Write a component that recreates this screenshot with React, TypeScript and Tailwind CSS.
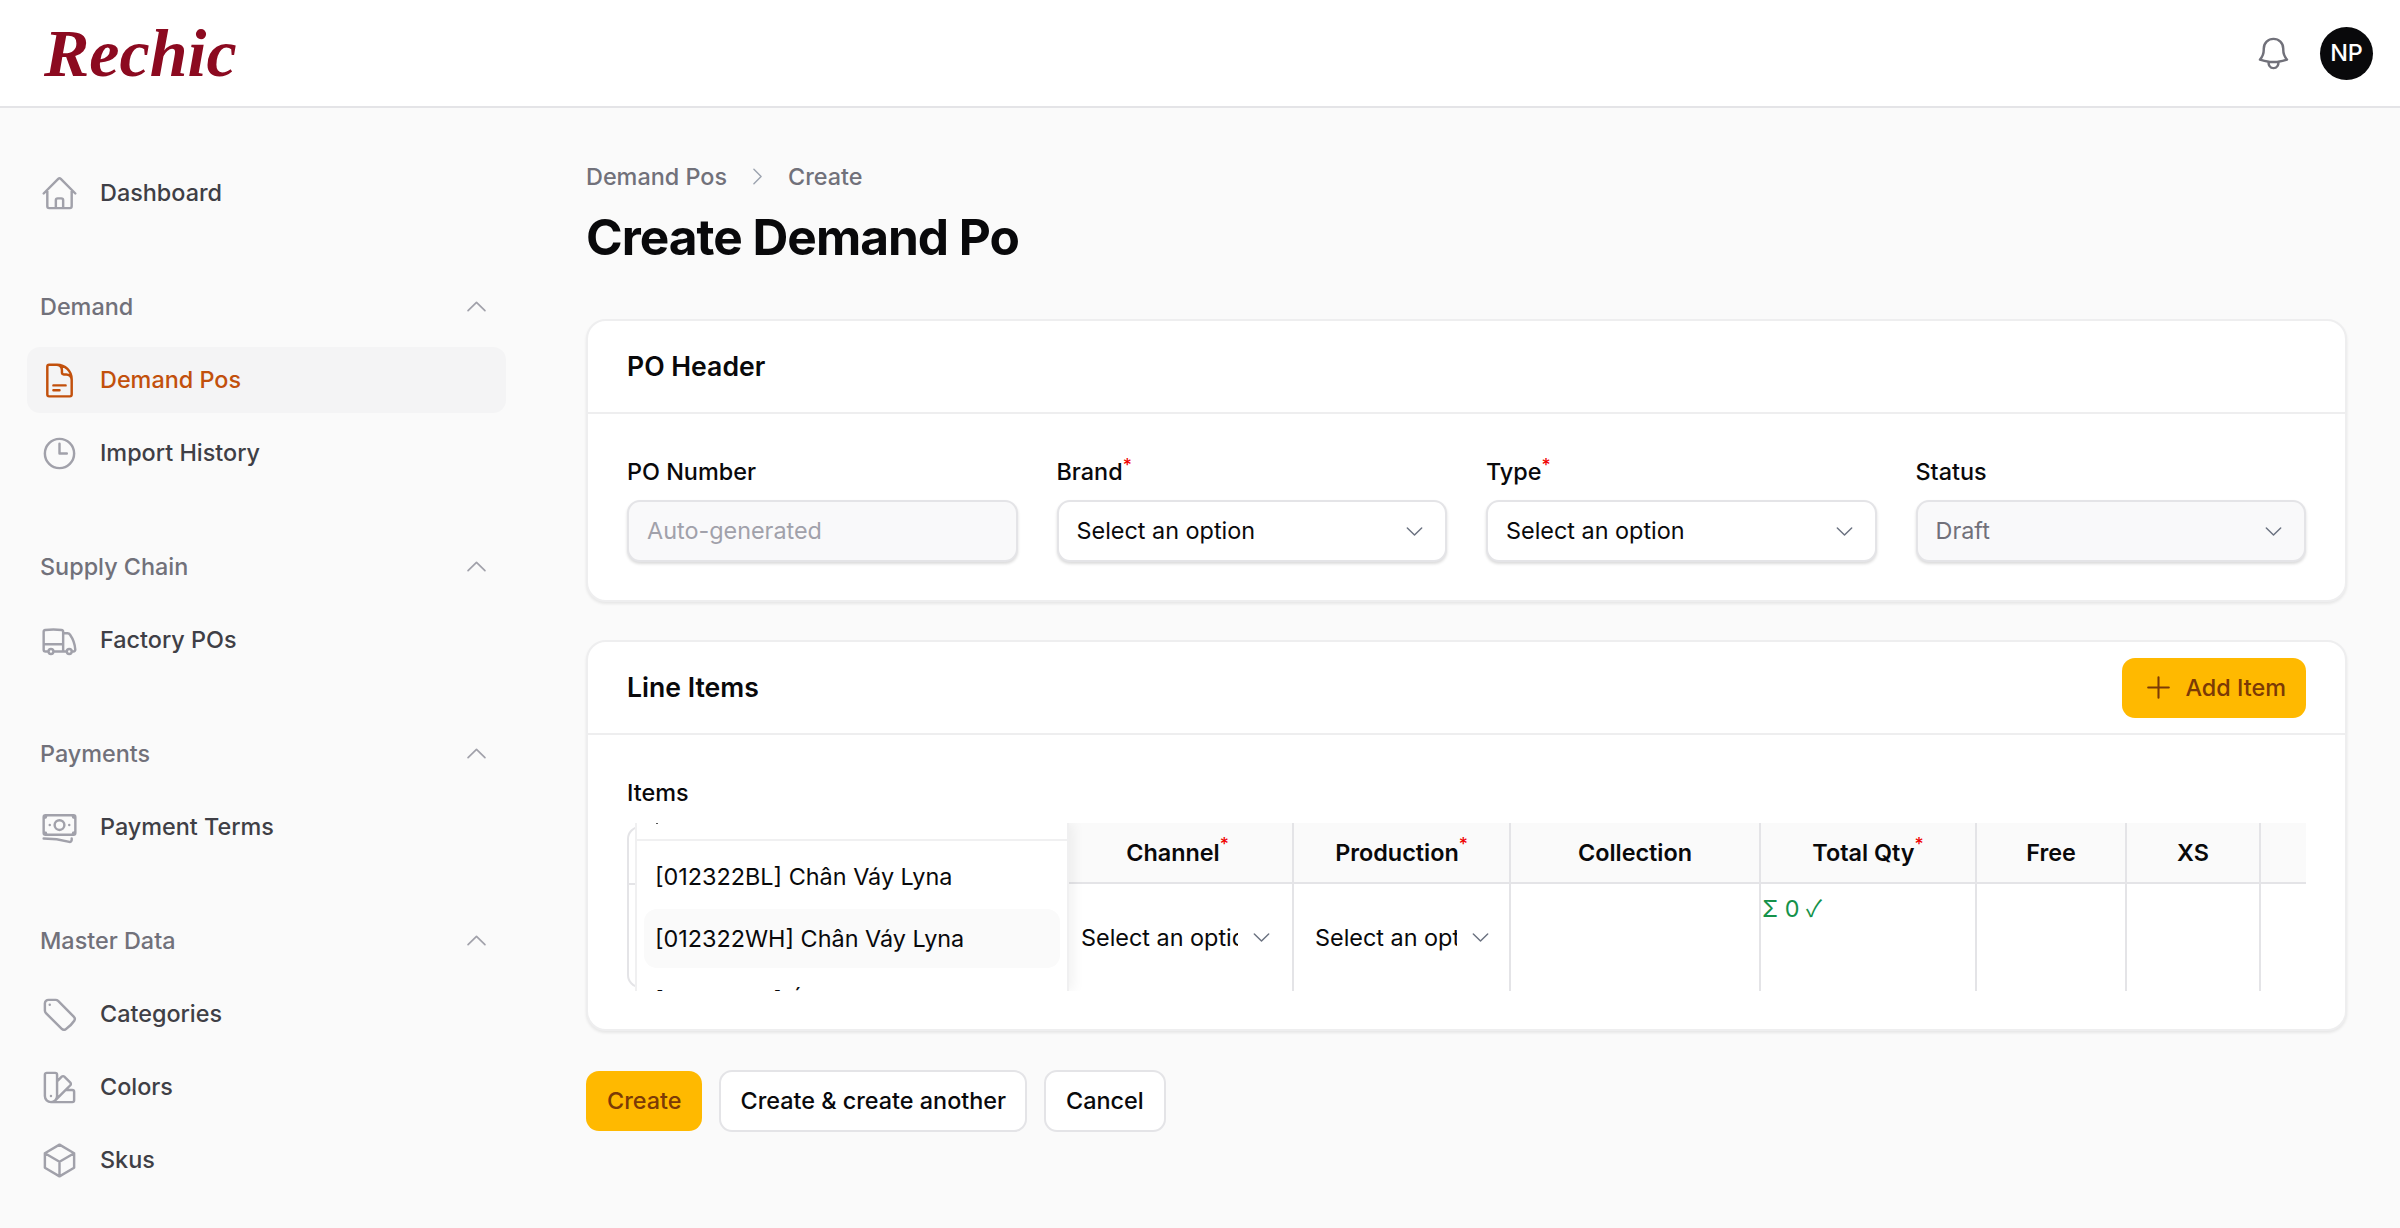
import { ReactNode } from "react";
import {
  HiOutlineBanknotes,
  HiOutlineBell,
  HiOutlineChevronDown,
  HiOutlineChevronRight,
  HiOutlineChevronUp,
  HiOutlineClock,
  HiOutlineCube,
  HiOutlineDocumentText,
  HiOutlineHome,
  HiOutlinePlus,
  HiOutlineSwatch,
  HiOutlineTag,
  HiOutlineTruck,
} from "react-icons/hi2";

const NavItem = ({
  icon,
  label,
  active,
}: {
  icon: ReactNode;
  label: string;
  active?: boolean;
}) => (
  <div
    className={`flex h-[66px] items-center gap-[21px] rounded-[13px] px-[13px] font-medium ${
      active ? "bg-[#f4f4f5] text-[#c2500c]" : "text-[#3f3f46]"
    }`}
  >
    <span className={`text-[39px] ${active ? "text-[#c2500c]" : "text-[#a1a1aa]"}`}>
      {icon}
    </span>
    {label}
  </div>
);

const NavGroup = ({ label, children }: { label: string; children: ReactNode }) => (
  <div className="flex flex-col">
    <div className="flex h-[40px] items-center justify-between pl-[13px] pr-[16px] font-medium text-[#71717a]">
      {label}
      <HiOutlineChevronUp className="text-[27px] text-[#a1a1aa]" />
    </div>
    <div className="mt-[20.5px] flex flex-col gap-[7px]">{children}</div>
  </div>
);

const Required = () => <sup className="font-medium text-[#ef0000]">*</sup>;

const Field = ({
  label,
  required,
  value,
  valueColor,
  bg,
  chevron,
}: {
  label: string;
  required?: boolean;
  value: string;
  valueColor: string;
  bg: string;
  chevron?: boolean;
}) => (
  <div className="flex flex-col gap-[12px]">
    <div className="h-[33px] font-medium leading-[33px] text-[#09090b]">
      {label}
      {required && <Required />}
    </div>
    <div
      className={`flex h-[62px] items-center justify-between rounded-[13px] border-2 border-[#e4e4e7] pl-[18px] pr-[19px] shadow-[0_2px_3px_rgba(0,0,0,0.14)] ${bg} ${valueColor}`}
    >
      {value}
      {chevron && <HiOutlineChevronDown className="text-[23px] text-[#6b7280]" />}
    </div>
  </div>
);

const HeadCell = ({ width, children }: { width: string; children?: ReactNode }) => (
  <div
    className={`${width} flex h-full shrink-0 items-center justify-center border-r-2 border-[#e4e4e7] font-semibold text-[#09090b]`}
  >
    {children}
  </div>
);

const SelectCell = ({ text, clip }: { text: string; clip: string }) => (
  <div className="flex items-center">
    <div className={`${clip} overflow-hidden whitespace-nowrap`}>{text}</div>
    <HiOutlineChevronDown className="ml-[12px] text-[23px] text-[#6b7280]" />
  </div>
);

export default function App() {
  return (
    <div className="flex h-screen flex-col overflow-hidden bg-[#fafafa] font-['Inter',sans-serif] text-[23.4px] text-[#09090b]">
      <header className="flex h-[108px] shrink-0 items-center justify-between border-b-2 border-[#e4e4e7] bg-white pl-[44px] pr-[27px]">
        <div className="font-['Liberation_Serif',serif] text-[68px] font-bold italic leading-none text-[#8c0a20]">
          Rechic
        </div>
        <div className="flex items-center gap-[27px]">
          <HiOutlineBell className="text-[39px] text-[#71717a]" />
          <div className="flex h-[53px] w-[53px] items-center justify-center rounded-full bg-[#09090b] font-medium text-white">
            NP
          </div>
        </div>
      </header>

      <div className="flex min-h-0 flex-1">
        <aside className="flex w-[533px] shrink-0 flex-col gap-[60.5px] pl-[27px] pr-[27px] pt-[52px]">
          <NavItem icon={<HiOutlineHome />} label="Dashboard" />
          <NavGroup label="Demand">
            <NavItem icon={<HiOutlineDocumentText />} label="Demand Pos" active />
            <NavItem icon={<HiOutlineClock />} label="Import History" />
          </NavGroup>
          <NavGroup label="Supply Chain">
            <NavItem icon={<HiOutlineTruck />} label="Factory POs" />
          </NavGroup>
          <NavGroup label="Payments">
            <NavItem icon={<HiOutlineBanknotes />} label="Payment Terms" />
          </NavGroup>
          <NavGroup label="Master Data">
            <NavItem icon={<HiOutlineTag />} label="Categories" />
            <NavItem icon={<HiOutlineSwatch />} label="Colors" />
            <NavItem icon={<HiOutlineCube />} label="Skus" />
          </NavGroup>
        </aside>

        <main className="min-w-0 flex-1 pl-[53px] pr-[53px] pt-[52px]">
          <div className="flex h-[33px] items-center gap-[19px] font-medium text-[#71717a]">
            Demand Pos
            <HiOutlineChevronRight className="text-[23px] text-[#9ca3af]" />
            Create
          </div>
          <h1 className="mt-[11px] text-[49.6px] font-bold leading-[66px] tracking-[-0.02em] text-[#09090b]">
            Create Demand Po
          </h1>

          <section className="mt-[49px] rounded-[20px] border-2 border-[#eeeeef] bg-white shadow-[0_2px_3px_rgba(0,0,0,0.08)]">
            <div className="flex h-[93px] items-center border-b-2 border-[#eeeeef] px-[39px] text-[26.6px] font-semibold">
              PO Header
            </div>
            <div className="grid grid-cols-4 gap-[39px] px-[39px] pb-[38px] pt-[41px]">
              <Field label="PO Number" value="Auto-generated" valueColor="text-[#a1a1aa]" bg="bg-[#f9f9fa]" />
              <Field label="Brand" required value="Select an option" valueColor="text-[#09090b]" bg="bg-white" chevron />
              <Field label="Type" required value="Select an option" valueColor="text-[#09090b]" bg="bg-white" chevron />
              <Field label="Status" value="Draft" valueColor="text-[#71717a]" bg="bg-[#f9f9fa]" chevron />
            </div>
          </section>

          <section className="mt-[38px] rounded-[20px] border-2 border-[#eeeeef] bg-white shadow-[0_2px_3px_rgba(0,0,0,0.08)]">
            <div className="flex h-[93px] items-center justify-between border-b-2 border-[#eeeeef] px-[39px] text-[26.6px] font-semibold">
              Line Items
              <button className="flex h-[60px] items-center gap-[10px] rounded-[13px] bg-[#ffb900] pl-[20px] pr-[20px] text-[23.4px] font-medium text-[#7b3a06]">
                <HiOutlinePlus className="text-[33px]" />
                Add Item
              </button>
            </div>
            <div className="px-[39px] pb-[38px] pt-[41px]">
              <div className="h-[33px] font-medium leading-[33px]">Items</div>
              <div className="relative mt-[14px] h-[168px] overflow-hidden">
                <div className="flex h-[61px] border-b-2 border-[#e4e4e7] bg-[#fafafa] pl-[442px]">
                  <HeadCell width="w-[225px] pr-[6px]">
                    Channel
                    <Required />
                  </HeadCell>
                  <HeadCell width="w-[217px]">
                    Production
                    <Required />
                  </HeadCell>
                  <HeadCell width="w-[250px]">Collection</HeadCell>
                  <HeadCell width="w-[216px]">
                    Total Qty
                    <Required />
                  </HeadCell>
                  <HeadCell width="w-[150px]">Free</HeadCell>
                  <HeadCell width="w-[134px]">XS</HeadCell>
                </div>
                <div className="flex h-[107px] pl-[442px]">
                  <div className="flex w-[225px] shrink-0 items-center border-r-2 border-[#e4e4e7] pl-[12px]">
                    <SelectCell text="Select an option" clip="w-[157px]" />
                  </div>
                  <div className="flex w-[217px] shrink-0 items-center border-r-2 border-[#e4e4e7] pl-[21px]">
                    <SelectCell text="Select an option" clip="w-[142px]" />
                  </div>
                  <div className="w-[250px] shrink-0 border-r-2 border-[#e4e4e7]" />
                  <div className="w-[216px] shrink-0 border-r-2 border-[#e4e4e7] pl-[1px] pt-[7px] leading-[33px] text-[#15924a]">
                    Σ 0 <span className="font-['Noto_Sans_CJK_SC',sans-serif]">✓</span>
                  </div>
                  <div className="w-[150px] shrink-0 border-r-2 border-[#e4e4e7]" />
                  <div className="w-[134px] shrink-0 border-r-2 border-[#e4e4e7]" />
                </div>

                {/* sticky first column and its open dropdown */}
                <div className="absolute left-0 top-0 flex h-full w-[442px] bg-white shadow-[4px_0_12px_rgba(0,0,0,0.06)]">
                  <div className="absolute left-0 right-0 top-[60px] h-[2px] bg-[#e4e4e7]" />
                  <div className="absolute left-0 top-[3px] h-[162px] w-[30px] rounded-l-[13px] border-2 border-[#e4e4e7]" />
                  <div className="absolute left-[8px] top-[-1px] h-[180px] w-[434px] border-x-2 border-[#f0f0f1] bg-white">
                    <div className="relative h-[19px] border-b-2 border-[#f0f0f1]">
                      <div className="absolute left-[19px] top-[0px] h-[2px] w-[2px] bg-[#555555]" />
                    </div>
                    <div className="mt-[6px] flex h-[60px] items-center pl-[18px]">[012322BL] Chân Váy Lyna</div>
                    <div className="mx-[7px] mt-[2px] flex h-[59px] items-center rounded-[13px] bg-[#fafafa] pl-[11px]">
                      [012322WH] Chân Váy Lyna
                    </div>
                    <div className="mt-[3px] flex h-[60px] items-center pl-[18px]">[012323BL] Áo Thùa</div>
                  </div>
                </div>
              </div>
            </div>
          </section>

          <div className="mt-[39px] flex items-center gap-[17px]">
            <button className="flex h-[60px] items-center rounded-[13px] bg-[#ffb900] px-[21px] font-medium text-[#7b3a06]">
              Create
            </button>
            <button className="flex h-[62px] items-center rounded-[13px] border-2 border-[#e4e4e7] bg-white px-[19px] font-medium">
              Create &amp; create another
            </button>
            <button className="flex h-[62px] items-center rounded-[13px] border-2 border-[#e4e4e7] bg-white px-[20px] font-medium">
              Cancel
            </button>
          </div>
        </main>
      </div>
    </div>
  );
}
